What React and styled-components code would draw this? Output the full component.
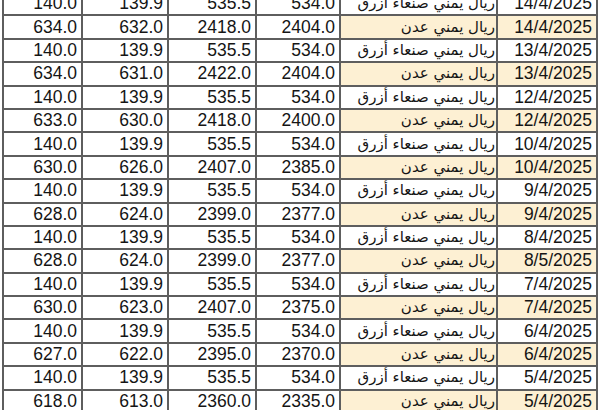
import React from 'react';
import styled, { createGlobalStyle } from 'styled-components';

const GlobalStyle = createGlobalStyle`
  html, body {
    margin: 0;
    padding: 0;
    background: #fff;
    overflow: hidden;
  }
`;

const Page = styled.div`
  width: 603px;
  height: 410px;
  overflow: hidden;
  background: #fff;
`;

const Table = styled.table`
  margin: -9px 0 0 2px;
  width: 595px;
  table-layout: fixed;
  border-collapse: collapse;
  font-family: "Liberation Sans", Arial, sans-serif;
  font-size: 17.5px;
  color: #151515;
`;

const Row = styled.tr`
  height: 23.4px;
`;

const Cell = styled.td`
  border: 2px solid #5e5e5e;
  padding: 0 4px 0 0;
  text-align: right;
  line-height: 19px;
  white-space: nowrap;
  overflow: hidden;
  background: ${(p) => (p.$hl ? '#fdf0d3' : '#fff')};
`;

const Name = styled(Cell)`
  direction: rtl;
  text-align: right;
  padding: 0 1px 0 0;
  font-family: "DejaVu Sans", sans-serif;
  font-size: 15px;
`;

const widths = [79, 86, 88, 84, 157, 100];

const SANAA = 'ريال يمني صنعاء أزرق';
const ADEN = 'ريال يمني عدن';
const low = ['140.0', '139.9', '535.5', '534.0'];

const rows = [
  [low, SANAA, '14/4/2025'],
  [['634.0', '632.0', '2418.0', '2404.0'], ADEN, '14/4/2025'],
  [low, SANAA, '13/4/2025'],
  [['634.0', '631.0', '2422.0', '2404.0'], ADEN, '13/4/2025'],
  [low, SANAA, '12/4/2025'],
  [['633.0', '630.0', '2418.0', '2400.0'], ADEN, '12/4/2025'],
  [low, SANAA, '10/4/2025'],
  [['630.0', '626.0', '2407.0', '2385.0'], ADEN, '10/4/2025'],
  [low, SANAA, '9/4/2025'],
  [['628.0', '624.0', '2399.0', '2377.0'], ADEN, '9/4/2025'],
  [low, SANAA, '8/4/2025'],
  [['628.0', '624.0', '2399.0', '2377.0'], ADEN, '8/5/2025'],
  [low, SANAA, '7/4/2025'],
  [['630.0', '623.0', '2407.0', '2375.0'], ADEN, '7/4/2025'],
  [low, SANAA, '6/4/2025'],
  [['627.0', '622.0', '2395.0', '2370.0'], ADEN, '6/4/2025'],
  [low, SANAA, '5/4/2025'],
  [['618.0', '613.0', '2360.0', '2335.0'], ADEN, '5/4/2025'],
];

export default function App() {
  return (
    <Page>
      <GlobalStyle />
      <Table>
        <colgroup>
          {widths.map((w, i) => (
            <col key={i} style={{ width: w }} />
          ))}
        </colgroup>
        <tbody>
          {rows.map(([nums, name, date], i) => {
            const hl = name === ADEN;
            return (
              <Row key={i}>
                {nums.map((n, j) => (
                  <Cell key={j}>{n}</Cell>
                ))}
                <Name $hl={hl}>{name}</Name>
                <Cell $hl={hl}>{date}</Cell>
              </Row>
            );
          })}
        </tbody>
      </Table>
    </Page>
  );
}
